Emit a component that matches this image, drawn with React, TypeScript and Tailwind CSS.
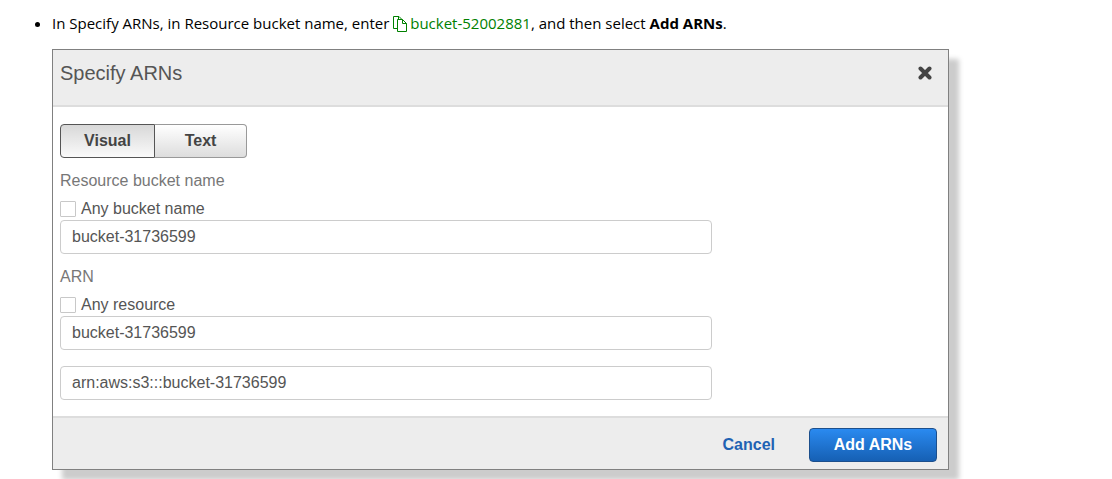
import { useState } from "react";

const fieldClass =
  "block h-[34px] w-full rounded-[4px] border border-[#cccccc] bg-white px-[11px] text-base text-[#555555] outline-none";
const boxClass =
  "h-4 w-4 shrink-0 appearance-none rounded-[1px] border border-[#c8c8c8] bg-white checked:bg-[#1a73d1]";
const checkRowClass = "mt-1 flex items-center gap-[5px] text-base leading-[23px] text-[#555555]";

function CopyIcon() {
  return (
    <svg
      className="mr-[3px] inline-block h-4 w-[14px] align-[-3px]"
      viewBox="0 0 14 16"
      fill="none"
      stroke="#008000"
      aria-hidden="true"
    >
      <path d="M4.5 12.5h-4V.5h5.500l3 3" />
      <path d="M5.500 .5v3" />
      <path d="M4.500 3.500h5l4 4v8h-9z" fill="#ffffff" />
      <path d="M9.500 3.500v4h4" />
    </svg>
  );
}

export default function App() {
  const [mode, setMode] = useState("visual");
  const [bucket, setBucket] = useState("bucket-31736599");
  const [resource, setResource] = useState("bucket-31736599");
  const [arn, setArn] = useState("arn:aws:s3:::bucket-31736599");

  return (
    <main className="min-h-screen bg-white pr-4 pl-[52px] font-['Liberation_Sans',Arial,sans-serif]">
      <ul className="list-disc pt-[11px] marker:text-black">
        <li className="font-['Open_Sans','Noto_Sans',sans-serif] text-[15px] leading-6 text-black">
          In Specify ARNs, in Resource bucket name, enter{" "}
          <a href="#copy" className="text-[#008000]">
            <CopyIcon />
            bucket-52002881
          </a>
          , and then select <strong>Add ARNs</strong>.
        </li>
      </ul>

      <section
        aria-labelledby="dialog-title"
        className="mt-[14px] w-full max-w-[897px] border border-[#808080] bg-white shadow-[10px_10px_5px_#cccccc]"
      >
        <header className="flex h-[57px] items-start justify-between border-b-2 border-[#dddddd] bg-[#ededed] pt-[7px] pr-4 pl-[7px]">
          <h1 id="dialog-title" className="text-xl leading-8 text-[#555555]">
            Specify ARNs
          </h1>
          <button type="button" aria-label="Close" className="mt-2 text-[#444444]">
            <svg className="h-4 w-[14px]" viewBox="0 0 14 16" stroke="currentColor" strokeWidth="4" strokeLinecap="round">
              <path d="M2.500 3.500l9 9M11.500 3.500l-9 9" />
            </svg>
          </button>
        </header>

        <div className="pt-[17px] pr-4 pb-4 pl-[7px]">
          <div className="flex h-[34px] text-base font-bold text-[#444444]">
            <button
              type="button"
              aria-pressed={mode === "visual"}
              onClick={() => setMode("visual")}
              className="w-[95px] rounded-l-[4px] border border-[#555555] bg-linear-to-b from-[#d8d8d8] to-[#fafafa]"
            >
              Visual
            </button>
            <button
              type="button"
              aria-pressed={mode === "text"}
              onClick={() => setMode("text")}
              className="w-[92px] rounded-r-[4px] border border-l-0 border-[#999999] bg-linear-to-b from-[#ffffff] to-[#dddddd]"
            >
              Text
            </button>
          </div>

          <div className="max-w-[652px]">
            <label htmlFor="bucket" className="mt-[11px] block text-base leading-6 text-[#777777]">
              Resource bucket name
            </label>
            <label className={checkRowClass}>
              <input type="checkbox" className={boxClass} />
              Any bucket name
            </label>
            <input id="bucket" value={bucket} onChange={(e) => setBucket(e.target.value)} className={fieldClass} />

            <label htmlFor="resource" className="mt-[11px] block text-base leading-6 text-[#777777]">
              ARN
            </label>
            <label className={checkRowClass}>
              <input type="checkbox" className={boxClass} />
              Any resource
            </label>
            <input id="resource" value={resource} onChange={(e) => setResource(e.target.value)} className={fieldClass} />
            <input
              aria-label="Full ARN"
              value={arn}
              onChange={(e) => setArn(e.target.value)}
              className={`${fieldClass} mt-4`}
            />
          </div>
        </div>

        <footer className="flex items-center justify-end border-t-2 border-[#dddddd] bg-[#ededed] pt-[10px] pr-[11px] pb-[7px] text-base font-bold">
          <button type="button" className="px-[34px] text-[#1f62b3]">
            Cancel
          </button>
          <button
            type="button"
            className="h-[34px] w-32 rounded-[4px] border border-[#1c4f8c] bg-linear-to-b from-[#2a8af0] to-[#1660b4] text-white"
          >
            Add ARNs
          </button>
        </footer>
      </section>
    </main>
  );
}
